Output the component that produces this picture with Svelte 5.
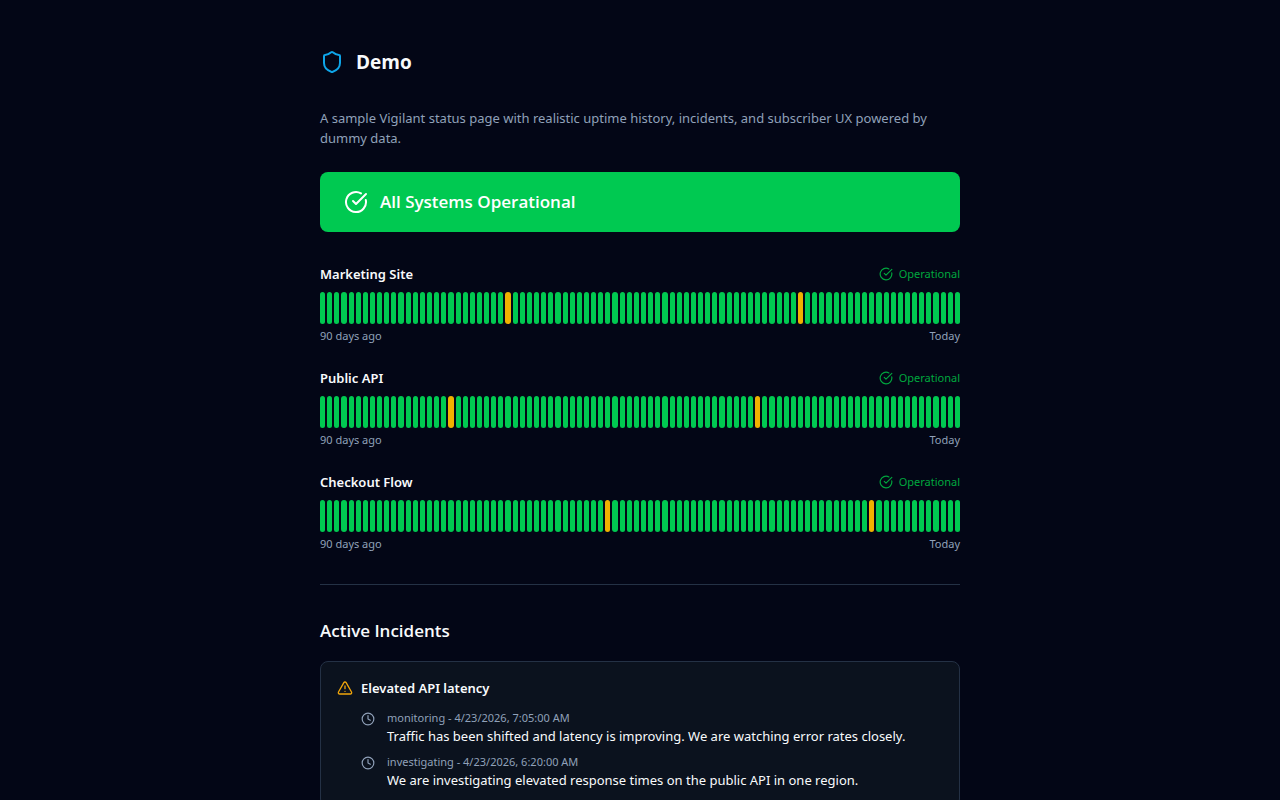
<script lang="ts">
    type Update = {
        status: string;
        time: string;
        message: string;
    }
    type Monitor = {
        name: string;
        degraded: number[];
    }

    const days = Array.from({ length: 90 }, (_, i) => i);

    const monitors: Monitor[] = [
        { name: 'Marketing Site', degraded: [26, 67] },
        { name: 'Public API', degraded: [18, 61] },
        { name: 'Checkout Flow', degraded: [40, 77] },
    ];

    const updates: Update[] = [
        {
            status: 'monitoring',
            time: '4/23/2026, 7:05:00 AM',
            message: 'Traffic has been shifted and latency is improving. We are watching error rates closely.',
        },
        {
            status: 'investigating',
            time: '4/23/2026, 6:20:00 AM',
            message: 'We are investigating elevated response times on the public API in one region.',
        },
    ];
</script>

{#snippet checkIcon(size: number)}
    <svg class="icon" width={size} height={size} viewBox="0 0 24 24" aria-hidden="true">
        <path d="M21.801 10A10 10 0 1 1 17 3.335" />
        <path d="m9 11 3 3L22 4" />
    </svg>
{/snippet}

<main>
    <header>
        <svg class="icon shield" width="24" height="24" viewBox="0 0 24 24" aria-hidden="true">
            <path d="M20 13c0 5-3.5 7.5-7.66 8.95a1 1 0 0 1-.67-.01C7.5 20.5 4 18 4 13V6a1 1 0 0 1 1-1c2 0 4.5-1.2 6.24-2.72a1.17 1.17 0 0 1 1.52 0C14.51 3.81 17 5 19 5a1 1 0 0 1 1 1z" />
        </svg>
        <h1>Demo</h1>
    </header>

    <p class="description">
        A sample Vigilant status page with realistic uptime history, incidents, and subscriber UX powered by dummy data.
    </p>

    <div class="banner">
        {@render checkIcon(24)}
        <span>All Systems Operational</span>
    </div>

    <section class="monitors">
        {#each monitors as monitor (monitor.name)}
            <article>
                <div class="row">
                    <h3>{monitor.name}</h3>
                    <span class="status">
                        {@render checkIcon(14)}
                        Operational
                    </span>
                </div>
                <div class="bars">
                    {#each days as day (day)}
                        <div class="bar" class:degraded={monitor.degraded.includes(day)}></div>
                    {/each}
                </div>
                <div class="row range">
                    <span>90 days ago</span>
                    <span>Today</span>
                </div>
            </article>
        {/each}
    </section>

    <section class="incidents">
        <h2>Active Incidents</h2>
        <article class="card">
            <div class="incident-title">
                <svg class="icon warning" width="16" height="16" viewBox="0 0 24 24" aria-hidden="true">
                    <path d="m21.73 18-8-14a2 2 0 0 0-3.48 0l-8 14A2 2 0 0 0 4 21h16a2 2 0 0 0 1.73-3" />
                    <path d="M12 9v4" />
                    <path d="M12 17h.01" />
                </svg>
                <h3>Elevated API latency</h3>
            </div>
            <ul>
                {#each updates as update (update.time)}
                    <li>
                        <svg class="icon clock" width="14" height="14" viewBox="0 0 24 24" aria-hidden="true">
                            <circle cx="12" cy="12" r="10" />
                            <path d="M12 6v6l4 2" />
                        </svg>
                        <div>
                            <p class="meta">{update.status} - {update.time}</p>
                            <p>{update.message}</p>
                        </div>
                    </li>
                {/each}
            </ul>
        </article>
    </section>
</main>

<style>
    :global(body) {
        margin: 0;
        background: #030616;
    }

    main {
        max-width: 640px;
        margin: 0 auto;
        padding: 48px 24px;
        font-family: "Segoe UI", "Noto Sans", "Open Sans", sans-serif;
        font-size: 13px;
        line-height: 20px;
        color: #f8fafc;
    }

    h1, h2, h3, p, ul {
        margin: 0;
        padding: 0;
    }

    h1, h2, .banner {
        font-family: "Segoe UI", "Open Sans", "Noto Sans", sans-serif;
    }

    h3 {
        font-size: 13px;
        font-weight: 600;
    }

    .icon {
        flex-shrink: 0;
        fill: none;
        stroke: currentColor;
        stroke-width: 2;
        stroke-linecap: round;
        stroke-linejoin: round;
    }

    header {
        display: flex;
        align-items: center;
        gap: 12px;
        margin-bottom: 32px;
    }

    h1 {
        font-size: 19px;
        line-height: 28px;
        font-weight: 700;
    }

    .shield {
        color: #0ea5e9;
    }

    .description {
        margin-bottom: 24px;
        color: #90a1b9;
    }

    .banner {
        display: flex;
        align-items: center;
        gap: 12px;
        padding: 16px 24px;
        margin-bottom: 32px;
        border-radius: 8px;
        background: #00c951;
        color: #fff;
        font-size: 17px;
        line-height: 28px;
        font-weight: 600;
    }

    .monitors {
        display: flex;
        flex-direction: column;
        gap: 24px;
        padding-bottom: 32px;
        border-bottom: 1px solid #243145;
    }

    .row {
        display: flex;
        align-items: center;
        justify-content: space-between;
    }

    .status {
        display: flex;
        align-items: center;
        gap: 6px;
        font-size: 11px;
        color: #00a63e;
    }

    .bars {
        display: grid;
        grid-template-columns: repeat(90, 1fr);
        gap: 2px;
        height: 32px;
        margin: 8px 0 4px;
    }

    .bar {
        border-radius: 4px;
        background: #00c951;
    }

    .bar.degraded {
        background: #f0b100;
    }

    .range {
        font-size: 11px;
        line-height: 16px;
        color: #90a1b9;
    }

    .incidents {
        padding-top: 32px;
    }

    h2 {
        margin-bottom: 16px;
        font-size: 17px;
        line-height: 28px;
        font-weight: 600;
    }

    .card {
        padding: 16px;
        border: 1px solid #243145;
        border-radius: 8px;
        background: #0b121e;
    }

    .incident-title {
        display: flex;
        align-items: center;
        gap: 8px;
    }

    .warning {
        color: #f0a50b;
    }

    ul {
        display: flex;
        flex-direction: column;
        gap: 8px;
        margin-top: 12px;
        padding-left: 24px;
        list-style: none;
    }

    li {
        display: flex;
        gap: 12px;
    }

    .clock {
        margin-top: 2px;
        color: #90a1b9;
    }

    .meta {
        font-size: 11px;
        line-height: 16px;
        color: #90a1b9;
    }
</style>
